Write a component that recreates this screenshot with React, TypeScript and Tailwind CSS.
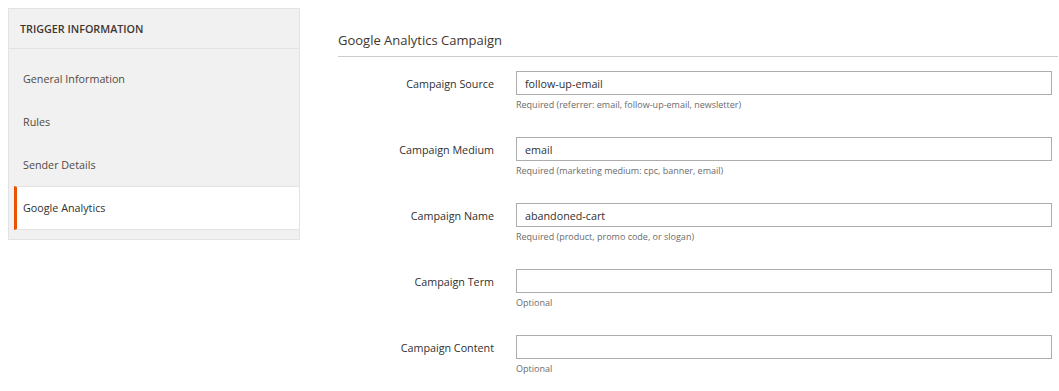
import React from 'react';

interface Field {
  label: string;
  value: string;
  note: string;
}

const fields: Field[] = [
  { label: 'Campaign Source', value: 'follow-up-email', note: 'Required (referrer: email, follow-up-email, newsletter)' },
  { label: 'Campaign Medium', value: 'email', note: 'Required (marketing medium: cpc, banner, email)' },
  { label: 'Campaign Name', value: 'abandoned-cart', note: 'Required (product, promo code, or slogan)' },
  { label: 'Campaign Term', value: '', note: 'Optional' },
  { label: 'Campaign Content', value: '', note: 'Optional' },
];

const tabs = ['General Information', 'Rules', 'Sender Details', 'Google Analytics'];

export default function App() {
  const active = 'Google Analytics';

  return (
    <div className="flex w-[1059px] min-h-[391px] bg-white font-['Open_Sans',sans-serif]">
      <aside className="w-[300px] shrink-0 pl-2 pt-2">
        <div className="border border-[#e3e3e3] bg-[#f1f1f1]">
          <div className="h-[40px] flex items-center pl-[11px] pt-[1px] border-b border-[#e3e3e3] text-[10.75px] font-semibold text-[#41362f]">
            TRIGGER INFORMATION
          </div>
          <ul className="pl-[5px] pt-[8px] pb-[9px]">
            {tabs.map((tab) =>
              tab === active ? (
                <li
                  key={tab}
                  className="h-[44px] flex items-center pl-[6px] pt-[1px] bg-white border-l-[3px] border-l-[#eb5202] border-y border-y-[#e3e3e3] text-[10.75px] text-[#303030]"
                >
                  {tab}
                </li>
              ) : (
                <li key={tab} className="h-[43px] flex items-center pl-[9px] pt-[1px] text-[10.75px] text-[#514943]">
                  {tab}
                </li>
              )
            )}
          </ul>
        </div>
      </aside>

      <main className="flex-1 pl-[38px] pr-[1px] pt-[30px]">
        <h3 className="pb-[6px] border-b border-[#cccccc] text-[13px] leading-[20px] text-[#41362f]">
          Google Analytics Campaign
        </h3>
        <div className="mt-[14px]">
          {fields.map((f) => (
            <div key={f.label} className="flex items-start mb-[26px]">
              <label className="w-[156px] h-[24px] pt-[2px] flex items-center justify-end text-[10.75px] text-[#303030]">
                {f.label}
              </label>
              <div className="flex-1 ml-[22px] mr-[6px]">
                <input
                  readOnly
                  defaultValue={f.value}
                  className="block w-full h-[24px] border border-[#adadad] bg-white px-[8px] pt-[1px] text-[10.75px] text-[#303030] outline-none"
                />
                <div className="mt-[4px] text-[9px] leading-[12px] text-[#6b6b6b]">{f.note}</div>
              </div>
            </div>
          ))}
        </div>
      </main>
    </div>
  );
}
